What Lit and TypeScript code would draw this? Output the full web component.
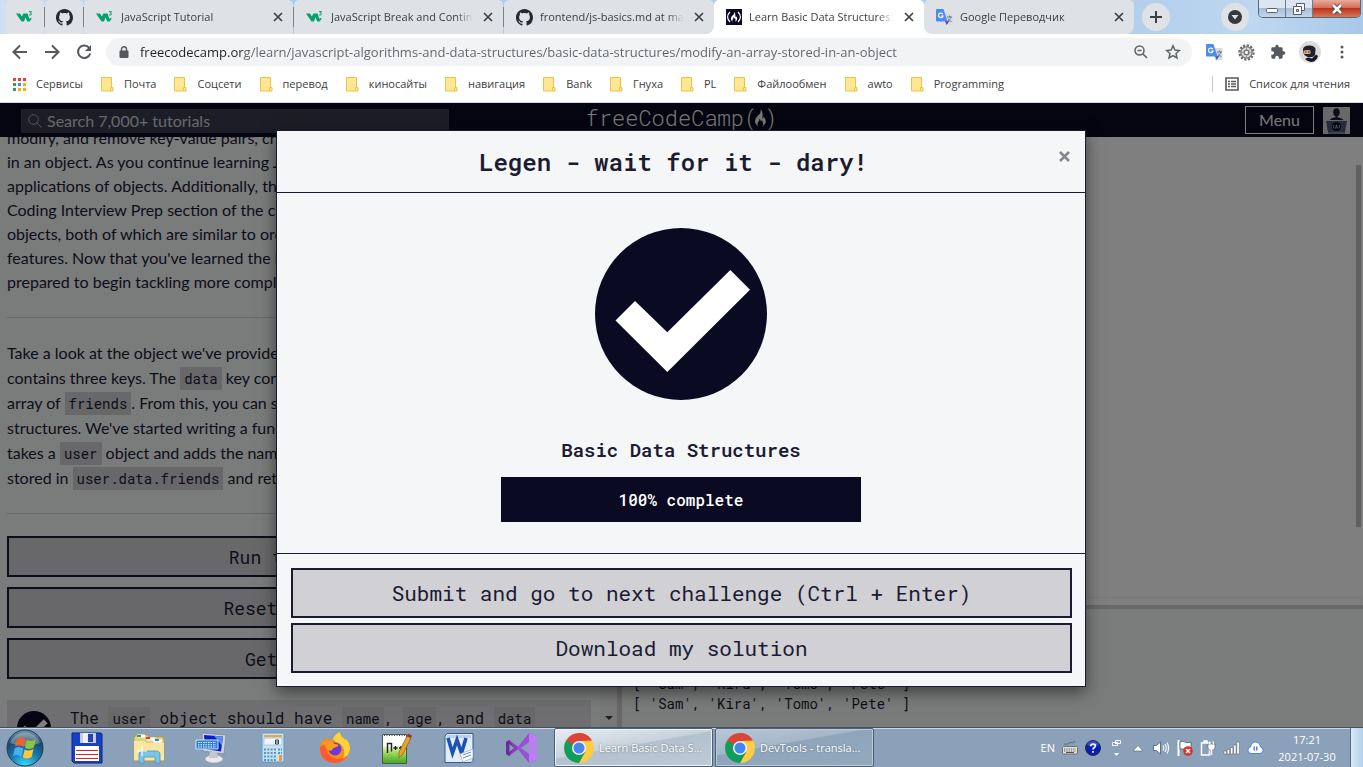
import { LitElement, html, css, TemplateResult } from "lit";
import { customElement } from "lit/decorators.js";
import { classMap } from "lit/directives/class-map.js";

const w3Icon = html`<svg width="18" height="16" viewBox="0 0 18 16" aria-hidden="true">
  <path d="M0 4.500h4l1.800 3 1.700-3h4l2 5.500 1-1 1.500.5-2.500 3h-2.200L9.500 8.500 8 12.500H5.500z" fill="#04a06a"/>
  <path d="M13 2.600h2.500l-1.200 1.500c1.600 0 1.600 2-.1 2-.6 0-1-.2-1.300-.6" fill="none" stroke="#04a06a" stroke-width="1"/>
</svg>`;

const githubIcon = html`<svg width="17" height="17" viewBox="0 0 16 16" aria-hidden="true">
  <path fill="#24292f" d="M8 0C3.580 0 0 3.580 0 8c0 3.540 2.290 6.530 5.470 7.590.4.070.55-.17.55-.38 0-.19-.01-.82-.01-1.490-2.010.37-2.530-.49-2.690-.94-.09-.23-.48-.94-.82-1.130-.28-.15-.68-.52-.01-.53.63-.01 1.080.58 1.230.82.72 1.210 1.870.87 2.330.66.07-.52.28-.87.51-1.070-1.780-.2-3.640-.89-3.640-3.950 0-.87.31-1.590.82-2.150-.08-.2-.36-1.020.08-2.120 0 0 .67-.21 2.200.82.64-.18 1.320-.27 2-.27s1.360.09 2 .27c1.530-1.040 2.200-.82 2.200-.82.44 1.100.16 1.920.08 2.120.51.56.82 1.270.82 2.150 0 3.070-1.870 3.750-3.650 3.950.29.25.54.73.54 1.480 0 1.070-.01 1.930-.01 2.200 0 .21.15.46.55.38A8.010 8.010 0 0 0 16 8c0-4.420-3.580-8-8-8z"/>
</svg>`;

const flame = "M9.500 1c.6 2.600-.4 3.900-1.800 5.500C6 8.300 4 10 4 12.800c0 2.200 1.400 4 3.400 5.200-1-1.200-1.300-2.900-.2-4.400.9-1.200 1.300-1.900 1-3.300 1.200.6 1.600 1.600 1.500 2.700.6-.3.900-.9.900-1.600 1.300 1.500 2.500 4.400.4 6.600 2.200-1 3.800-2.900 3.800-5.200 0-2.400-1.500-3.700-2.500-4.800.1 1.200-.2 2-.9 2.500C11.600 6.500 12.300 3 9.500 1z";

const fccIcon = html`<svg width="16" height="16" viewBox="0 0 16 16" aria-hidden="true">
  <rect width="16" height="16" fill="#0a0a23"/>
  <path d="M4 3C.8 6 .8 10 4 13M12 3c3.200 3 3.200 7 0 10" fill="none" stroke="#fff" stroke-width="1.200"/>
  <path transform="translate(2.600 2.300) scale(.58)" d="${flame}" fill="#fff"/>
</svg>`;

const translateIcon = html`<svg width="17" height="17" viewBox="0 0 17 17" aria-hidden="true">
  <path d="M7 4h9.500v12H9z" fill="#dcdcdc"/>
  <path d="M9 12l1.500 4 3-4z" fill="#3a4fd0"/>
  <path d="M11 8h5M13.500 6.500V8M15 8c-.5 2-2 3.500-4 4.500M12 9.500c.8 1.500 1.800 2.400 3.500 3" fill="none" stroke="#607d8b" stroke-width="1"/>
  <path d="M1 0h6.500l4 12.500H1a1 1 0 0 1-1-1V1a1 1 0 0 1 1-1z" fill="#4c8bf5"/>
  <path d="M6.800 5.200A2.300 2.300 0 1 0 7 7H5" fill="none" stroke="#fff" stroke-width="1.200"/>
</svg>`;

const tabClose = html`<svg width="10" height="10" viewBox="0 0 10 10" aria-hidden="true">
  <path d="M1 1l8 8M9 1L1 9" stroke="#3c4043" stroke-width="1.700"/>
</svg>`;

const folderIcon = html`<svg width="13" height="15" viewBox="0 0 13 15" aria-hidden="true">
  <path d="M.5.500h10v10h1.500v3.500H.5z" fill="#ffe694" stroke="#e8c547"/>
  <path d="M10.500 10.500h-1v3" fill="none" stroke="#e8c547"/>
</svg>`;

const chromeIcon = html`<svg width="30" height="30" viewBox="0 0 30 30" aria-hidden="true">
  <path d="M15 15L2.010 7.500A15 15 0 0 1 27.990 7.500z" fill="#db4437"/>
  <path d="M15 0a15 15 0 0 1 12.990 7.500H15z" fill="#db4437"/>
  <path d="M27.990 7.500A15 15 0 0 1 15 30l6.500-11.250L15 8z" fill="#ffcd40"/>
  <path d="M2.010 7.500A15 15 0 0 0 15 30l6.300-11.200L9 19z" fill="#0f9d58"/>
  <path d="M9 19L2.010 7.500 15 8l-3 5z" fill="#db4437"/>
  <path d="M2.010 7.500L8.500 18.800 11 12z" fill="#0f9d58"/>
  <circle cx="15" cy="15" r="7" fill="#f1f1f1"/>
  <circle cx="15" cy="15" r="5.500" fill="#4285f4"/>
</svg>`;

const passBadge = html`<svg class="badge" viewBox="0 0 172 172" role="img" aria-label="Passed">
  <circle cx="86" cy="86" r="86" fill="#0a0a23"/>
  <path d="M40 73L20.500 92.500 72.300 144 155 61.700 135.300 42 72.300 104.300z" fill="#fff"/>
</svg>`;

interface Tab {
  title: string;
  icon: TemplateResult;
  kind: "pinned" | "normal" | "before" | "active" | "after";
}

const tabs: Tab[] = [
  { title: "", icon: w3Icon, kind: "pinned" },
  { title: "", icon: githubIcon, kind: "pinned" },
  { title: "JavaScript Tutorial", icon: w3Icon, kind: "normal" },
  { title: "JavaScript Break and Continue", icon: w3Icon, kind: "normal" },
  { title: "frontend/js-basics.md at master", icon: githubIcon, kind: "before" },
  { title: "Learn Basic Data Structures: Modify", icon: fccIcon, kind: "active" },
  { title: "Google Переводчик", icon: translateIcon, kind: "after" },
];

const bookmarks = [
  "Почта", "Соцсети", "перевод", "киносайты", "навигация", "Bank",
  "Гнуха", "PL", "Файлообмен", "awto", "Programming",
];

@customElement("browser-chrome")
export class BrowserChrome extends LitElement {
  static styles = css`
    :host { display: block; flex: none; font: 11px/16px "Segoe UI", "Open Sans", "Noto Sans", sans-serif; color: #3c4043; }
    * { box-sizing: border-box; }
    button { border: 0; padding: 0; background: none; font: inherit; color: inherit; display: grid; place-items: center; flex: none; }
    a { color: inherit; text-decoration: none; }
    svg { display: block; flex: none; }
    .strip { display: flex; height: 34px; padding-left: 6px; background: linear-gradient(90deg, #cfe0f3 0, #a9cbea 20%, #b3d0ec 85%, #bfd7f0 92%, #a8c8e9 100%); }
    .slot { flex: 0 1 210px; min-width: 0; display: flex; }
    .slot.pinned { flex: none; width: 39px; }
    .slot.before { background: linear-gradient(#fff, #fff) right bottom / 12px 12px no-repeat; }
    .slot.after { background: linear-gradient(#fff, #fff) left bottom / 12px 12px no-repeat; }
    .tab { flex: 1; min-width: 0; display: flex; align-items: center; background: #dee1e6; border-radius: 5px 5px 0 0; padding-left: 12px; }
    .pinned .tab { justify-content: center; padding: 0; }
    .before .tab { border-radius: 5px 5px 8px 0; }
    .after .tab { border-radius: 5px 5px 8px 8px; }
    .active .tab { background: #fff; }
    .page { flex: 1; min-width: 0; display: flex; align-items: center; gap: 7px; }
    .pinned .page { flex: none; }
    .title { flex: 1; overflow: hidden; white-space: nowrap; -webkit-mask-image: linear-gradient(90deg, #000 88%, transparent); mask-image: linear-gradient(90deg, #000 88%, transparent); }
    .close { width: 30px; height: 20px; }
    .divider { align-self: center; width: 1px; height: 20px; background: #808388; flex: none; }
    .round { width: 28px; height: 28px; border-radius: 50%; background: #dee1e6; align-self: center; }
    .new { margin: 0 8px; }
    .end { margin-left: auto; display: flex; gap: 9px; padding-right: 2px; }
    .controls { display: flex; height: 18px; border: 1px solid #566778; border-top: 0; border-radius: 0 0 5px 5px; overflow: hidden; }
    .control { width: 27px; height: 17px; background: linear-gradient(#dbe6f2 45%, #a9bdd3 50%, #c4d6e8); border-right: 1px solid #6a7c90; }
    .control.quit { width: 47px; background: linear-gradient(#e9aa9b 0, #d6705b 45%, #b8351a 50%, #d87757); border: 0; }
    .toolbar { display: flex; align-items: center; height: 36px; background: #fff; padding-left: 4px; padding-right: 5px; }
    .tool { width: 32px; height: 32px; }
    .omni { flex: 1; min-width: 0; display: flex; align-items: center; height: 28px; border-radius: 14px; background: #f1f3f4; margin: 0 6px; padding: 0 3px 0 13px; }
    .url { flex: 1; min-width: 0; border: 0; outline: 0; margin-left: 11px; padding: 0; font: 13px/20px "Segoe UI", "Open Sans", "Noto Sans", sans-serif; color: transparent; background: linear-gradient(90deg, #202124 104px, #5f6368 104px); -webkit-background-clip: text; background-clip: text; }
    .marks { display: flex; align-items: center; height: 33px; background: #fff; border-bottom: 1px solid #d5d8dc; padding: 0 13px 4px; }
    .list { display: flex; align-items: center; gap: 18px; }
    .mark { display: flex; align-items: center; gap: 10px; white-space: nowrap; }
    .reading { margin-left: auto; border-left: 1px solid #c6c8cb; padding-left: 12px; }
  `;

  render() {
    return html`
      <nav class="strip" aria-label="Tabs">
        ${tabs.map((t) => html`
          <div class="slot ${t.kind}">
            <div class="tab">
              <a class="page" href="#" aria-label=${t.title || "Pinned tab"}>
                ${t.icon}${t.title ? html`<span class="title">${t.title}</span>` : ""}
              </a>
              ${t.title ? html`<button class="close" aria-label="Close tab">${tabClose}</button>` : ""}
            </div>
            ${t.kind === "pinned" || t.title.startsWith("JavaScript") ? html`<span class="divider"></span>` : ""}
          </div>`)}
        <button class="round new" aria-label="New tab">
          <svg width="14" height="14" viewBox="0 0 14 14"><path d="M7 1v12M1 7h12" stroke="#3c4043" stroke-width="2"/></svg>
        </button>
        <div class="end">
          <button class="round" aria-label="Search tabs">
            <svg width="14" height="14" viewBox="0 0 14 14"><circle cx="7" cy="7" r="7" fill="#35383c"/><path d="M3.500 5h7L7 9.500z" fill="#dee1e6"/></svg>
          </button>
          <div class="controls">
            <button class="control" aria-label="Minimize">
              <svg width="14" height="12" viewBox="0 0 14 12"><rect x="1.500" y="5.500" width="11" height="4" rx="1" fill="#fff" stroke="#525f6e"/></svg>
            </button>
            <button class="control" aria-label="Restore">
              <svg width="14" height="14" viewBox="0 0 14 14"><path d="M4.500 1.500h8v7h-8z" fill="#fff" stroke="#525f6e"/><path d="M1.500 4.500h8v8h-8z" fill="#fff" stroke="#525f6e"/><path d="M4.500 7.500h2v2h-2z" fill="#c4d6e8" stroke="#525f6e"/></svg>
            </button>
            <button class="control quit" aria-label="Close window">
              <svg width="14" height="12" viewBox="0 0 14 12"><path d="M3 2l8 8M11 2l-8 8" stroke="#4c3c48" stroke-width="4.500"/><path d="M3 2l8 8M11 2l-8 8" stroke="#fff" stroke-width="2.600"/></svg>
            </button>
          </div>
        </div>
      </nav>
      <div class="toolbar">
        <button class="tool" aria-label="Back"><svg width="16" height="16" viewBox="0 0 16 16"><path d="M15 8H2M8 1.500L1.500 8 8 14.500" fill="none" stroke="#55585d" stroke-width="2"/></svg></button>
        <button class="tool" aria-label="Forward"><svg width="16" height="16" viewBox="0 0 16 16"><path d="M1 8h13M8 1.500L14.500 8 8 14.500" fill="none" stroke="#55585d" stroke-width="2"/></svg></button>
        <button class="tool" aria-label="Reload"><svg width="16" height="16" viewBox="0 0 16 16"><path d="M13.200 4A6.200 6.200 0 1 0 14.200 9.500" fill="none" stroke="#55585d" stroke-width="2"/><path d="M15 1v6H9z" fill="#55585d"/></svg></button>
        <div class="omni">
          <svg width="10" height="12" viewBox="0 0 10 12"><path d="M2.500 5V3.200a2.500 2.500 0 0 1 5 0V5" fill="none" stroke="#55585d" stroke-width="1.400"/><rect x=".5" y="4.500" width="9" height="7.500" rx="1" fill="#55585d"/></svg>
          <input class="url" type="text" aria-label="Address" value="freecodecamp.org/learn/javascript-algorithms-and-data-structures/basic-data-structures/modify-an-array-stored-in-an-object">
          <button class="tool" aria-label="Zoom"><svg width="14" height="14" viewBox="0 0 14 14"><circle cx="5.500" cy="5.500" r="4.500" fill="none" stroke="#5f6368" stroke-width="1.500"/><path d="M3.500 5.500h4M9 9l4 4" stroke="#5f6368" stroke-width="1.600"/></svg></button>
          <button class="tool" aria-label="Bookmark this page"><svg width="16" height="16" viewBox="0 0 16 16"><path d="M8 1.800l1.900 4.200 4.500.5-3.400 3 1 4.500L8 11.700 4 14l1-4.500-3.400-3 4.500-.5z" fill="none" stroke="#5f6368" stroke-width="1.500"/></svg></button>
        </div>
        <button class="tool" aria-label="Translate">${translateIcon}</button>
        <button class="tool" aria-label="Settings"><svg width="17" height="17" viewBox="0 0 17 17"><circle cx="8.500" cy="8.500" r="7" fill="none" stroke="#6b6b6b" stroke-width="2.400" stroke-dasharray="2.200 1.460"/><circle cx="8.500" cy="8.500" r="5.600" fill="#dadada" stroke="#7b7b7b" stroke-width="1.300"/><circle cx="8.500" cy="8.500" r="2.400" fill="#f4f4f4" stroke="#707070" stroke-width="1.300"/><path d="M8.500 3v3M8.500 11v3M3 8.500h3M11 8.500h3" stroke="#999"/></svg></button>
        <button class="tool" aria-label="Extensions"><svg width="16" height="16" viewBox="0 0 24 24"><path fill="#55585d" d="M20.500 11H19V7a2 2 0 0 0-2-2h-4V3.500a2.500 2.500 0 0 0-5 0V5H4a2 2 0 0 0-2 2v3.800h1.500a2.700 2.700 0 0 1 0 5.400H2V20a2 2 0 0 0 2 2h3.800v-1.500a2.700 2.700 0 0 1 5.400 0V22H17a2 2 0 0 0 2-2v-4h1.500a2.500 2.500 0 0 0 0-5z"/></svg></button>
        <button class="tool" aria-label="Profile"><svg width="22" height="22" viewBox="0 0 22 22"><circle cx="11" cy="11" r="11" fill="#dcdcdc"/><path d="M4 8q1-4 7-3.500Q17 5 16.500 9l-.5 5Q14 17 9 16q-4-1-5-5z" fill="#20232b"/><path d="M4.500 9.800q4-1.500 7-.3v3q-3.500 1-7 0z" fill="#e5b088"/><path d="M6 11h1.500M9 11h1.500" stroke="#222"/><path d="M6 18l3-1.500 4 1 4-4 2 1.500q-1 4-4 5.500-5 1.500-9-2.500z" fill="#15181f"/></svg></button>
        <button class="tool" aria-label="Menu"><svg width="4" height="16" viewBox="0 0 4 16"><circle cx="2" cy="3" r="1.500" fill="#55585d"/><circle cx="2" cy="8" r="1.500" fill="#55585d"/><circle cx="2" cy="13" r="1.500" fill="#55585d"/></svg></button>
      </div>
      <nav class="marks" aria-label="Bookmarks">
        <div class="list">
          <a class="mark" href="#">
            <svg width="13" height="13" viewBox="0 0 13 13"><path d="M0 0h3v3H0zM5 0h3v3H5zM10 0h3v3h-3z" fill="#ea4335"/><path d="M0 5h3v3H0zM0 10h3v3H0z" fill="#34a053"/><path d="M5 5h3v3H5z" fill="#4285f4"/><path d="M10 5h3v3h-3zM5 10h3v3H5zM10 10h3v3h-3z" fill="#fbaa05"/></svg>
            Сервисы
          </a>
          ${bookmarks.map((b) => html`<a class="mark" href="#">${folderIcon}${b}</a>`)}
        </div>
        <a class="mark reading" href="#">
          <svg width="14" height="14" viewBox="0 0 14 14"><path d="M1 1h12v12H1z" fill="none" stroke="#55585d" stroke-width="1.600"/><path d="M3 4.500h2M6 4.500h5M3 7h2M6 7h5M3 9.500h2M6 9.500h5" stroke="#55585d" stroke-width="1.300"/></svg>
          Список для чтения
        </a>
      </nav>`;
  }
}

@customElement("lesson-page")
export class LessonPage extends LitElement {
  static styles = css`
    :host { display: flex; flex-direction: column; flex: 1; min-height: 0; position: relative; overflow: hidden; background: #f5f6f7; color: #1b1b32; font: 16px/24px Lato, sans-serif; }
    * { box-sizing: border-box; }
    svg { display: block; flex: none; }
    button { font: inherit; color: inherit; padding: 0; }
    p, h1, h2 { margin: 0; }
    .mono, code, pre { font-family: "Roboto Mono", "Liberation Mono", monospace; }
    .top { flex: none; display: grid; grid-template-columns: 1fr auto 1fr; align-items: center; height: 34px; padding: 0 13px 0 21px; background: #0a0a23; color: #fff; }
    .search { display: flex; align-items: center; gap: 5px; height: 24px; width: 100%; max-width: 428px; margin-top: 2px; padding-left: 7px; background: #3b3b4f; }
    .query { flex: 1; min-width: 0; border: 0; outline: 0; padding: 0; background: none; color: #d0d0d5; font: 16px/24px Lato, sans-serif; }
    .query::placeholder { color: #d0d0d5; opacity: 1; }
    .logo { display: flex; align-items: center; color: #f0f0f0; text-decoration: none; font-size: 22px; line-height: 30px; font-weight: 300; padding: 0 8px 4px 0; }
    .logo svg { margin: 0 -3px; }
    .account { justify-self: end; display: flex; gap: 9px; align-items: center; }
    .menu { width: 69px; height: 28px; border: 1px solid #fff; background: none; color: #f0f0f0; }
    .panes { flex: 1; min-height: 0; display: grid; grid-template-columns: 600px 17px 5px 1fr; }
    .lesson { overflow: hidden; padding: 0 9px 0 7px; }
    .lead { margin-top: -11px; }
    .line { display: block; white-space: nowrap; }
    .task { line-height: 25px; }
    .rule { height: 1px; margin: 23px 0 22px; background: #d0d0d5; }
    code { font-size: 14px; line-height: 20px; background: #d0d0d5; padding: 2px 4px; }
    .actions { display: flex; flex-direction: column; gap: 10px; }
    .action { height: 41px; border: 2px solid #1b1b32; background: #d0d0d5; font-size: 18px; }
    .tests { margin-top: 21px; padding: 4px 10px; display: flex; gap: 19px; background: #dfdfe2; height: 60px; }
    .tests .badge { width: 34px; height: 34px; margin-top: 7px; }
    .tests p { line-height: 28px; }
    .track { display: grid; align-items: end; justify-items: center; background: #f1f1f1; padding-bottom: 7px; }
    .split { background: #d0d0d5; }
    .work { display: grid; grid-template-rows: 1fr 4px 118px; min-width: 0; }
    .editor { display: grid; grid-template-rows: 1fr 8px; background: #fffffe; padding: 28px 2px 0 0; }
    .thumb { justify-self: end; width: 5px; height: 362px; background: #c0c0c0; }
    .hscroll { border: 1px solid #f0f0f0; border-width: 1px 1px 0 0; }
    .console { display: flex; flex-direction: column; justify-content: flex-end; margin: 0; padding: 0 11px 13px; font-size: 14px; line-height: 20px; overflow: hidden; }
    .veil { position: absolute; inset: 0; background: rgba(0, 0, 0, 0.5); display: flex; justify-content: center; align-items: flex-start; padding: 27px 1px 0 0; }
    .dialog { width: 100%; max-width: 810px; background: #f5f6f7; border: 1px solid #1b1b32; box-shadow: 0 5px 15px rgba(0, 0, 0, 0.5); }
    .head { display: flex; align-items: center; padding: 15px 13px 14px 14px; border-bottom: 1px solid #1b1b32; }
    .head h1 { flex: 1; text-align: center; font-size: 24px; line-height: 32px; font-weight: 600; }
    .x { width: 16px; height: 20px; align-self: flex-start; border: 0; background: none; display: grid; place-items: center; }
    .body { display: flex; flex-direction: column; align-items: center; padding: 35px 14px 31px; border-bottom: 1px solid #1b1b32; }
    .body .badge { width: 172px; height: 172px; }
    .body h2 { margin: 36px 0 14px; font-size: 19px; line-height: 27px; font-weight: 600; }
    .bar { width: 100%; max-width: 360px; background: #d0d0d5; }
    .fill { background: #0a0a23; color: #fff; text-align: center; font-size: 16px; line-height: 45px; font-weight: 500; }
    .foot { display: flex; flex-direction: column; gap: 5px; padding: 14px 13px 13px 14px; }
    .big { height: 50px; border: 2px solid #1b1b32; background: #d0d0d5; font-size: 21px; }
  `;

  render() {
    const progress = 100;
    return html`
      <header class="top">
        <label class="search">
          <svg width="14" height="14" viewBox="0 0 14 14" aria-hidden="true"><circle cx="5.500" cy="5.500" r="4.800" fill="none" stroke="#a8a8b0"/><path d="M9 9l4.500 4.500" stroke="#a8a8b0"/></svg>
          <input class="query" type="search" placeholder="Search 7,000+ tutorials" aria-label="Search tutorials">
        </label>
        <a class="logo mono" href="#">freeCodeCamp(<svg width="13" height="20" viewBox="3 0 13 19" aria-hidden="true"><path d="${flame}" fill="#f0f0f0"/></svg>)</a>
        <div class="account">
          <button class="menu">Menu</button>
          <svg width="27" height="27" viewBox="0 0 27 27" role="img" aria-label="Avatar">
            <rect width="27" height="27" fill="#d0d0d5"/>
            <ellipse cx="13.500" cy="5.300" rx="3.300" ry="4" fill="#1b1b32"/>
            <path d="M12.500 8h2v3h-2z" fill="#1b1b32"/>
            <path d="M6.500 13q2-2.500 5-2.500h4q3 0 5 2.500z" fill="#1b1b32"/>
            <path d="M3 14h21l-2 11H5z" fill="#54547c"/><path d="M5 26h17" stroke="#40406a"/>
            <circle cx="13.500" cy="19.500" r="4.600" fill="#0a0a23"/><path d="M11 17.800q-1 2 0 3.500M16 17.800q1 2 0 3.500M12.500 21.500l1-3.500 1 3.500" fill="none" stroke="#d0d0d5" stroke-width=".8"/>
          </svg>
        </div>
      </header>
      <div class="panes">
        <main class="lesson">
          <p class="lead">
            <span class="line">modify, and remove key-value pairs, check if keys exist, and iterate over all the keys</span>
            <span class="line">in an object. As you continue learning JavaScript you will see even more versatile</span>
            <span class="line">applications of objects. Additionally, the Data Structures lessons located in the</span>
            <span class="line">Coding Interview Prep section of the curriculum also cover the ES6 Map and Set</span>
            <span class="line">objects, both of which are similar to ordinary objects but provide some additional</span>
            <span class="line">features. Now that you've learned the basics of arrays and objects, you're fully</span>
            <span class="line">prepared to begin tackling more complex problems using JavaScript!</span>
          </p>
          <div class="rule"></div>
          <p class="task">
            <span class="line">Take a look at the object we've provided in the code editor. The object</span>
            <span class="line">contains three keys. The <code>data</code> key contains five keys, one of which is an</span>
            <span class="line">array of <code>friends</code>. From this, you can see how flexible objects are as data</span>
            <span class="line">structures. We've started writing a function. Finish writing it so that it</span>
            <span class="line">takes a <code>user</code> object and adds the name of the friend to the array</span>
            <span class="line">stored in <code>user.data.friends</code> and returns that array.</span>
          </p>
          <div class="rule"></div>
          <div class="actions">
            <button class="action mono">Run the Tests</button>
            <button class="action mono">Reset All Code</button>
            <button class="action mono">Get a Hint</button>
          </div>
          <div class="tests mono">
            ${passBadge}
            <p>The <code>user</code> object should have <code>name</code>, <code>age</code>, and <code>data</code></p>
          </div>
        </main>
        <div class="track"><svg width="8" height="4" viewBox="0 0 8 4" aria-hidden="true"><path d="M0 0h8L4 4z" fill="#404040"/></svg></div>
        <div class="split"></div>
        <div class="work">
          <div class="editor"><div class="thumb"></div><div class="hscroll"></div></div>
          <div class="split"></div>
          <pre class="console"><span>[ 'Sam', 'Kira', 'Tomo', 'Pete' ]</span><span>[ 'Sam', 'Kira', 'Tomo', 'Pete' ]</span></pre>
        </div>
      </div>
      <div class="veil">
        <section class="dialog" role="dialog" aria-labelledby="win-title">
          <div class="head">
            <h1 class="mono" id="win-title">Legen - wait for it - dary!</h1>
            <button class="x" aria-label="Close">
              <svg width="11" height="11" viewBox="0 0 11 11"><path d="M1 1l9 9M10 1l-9 9" stroke="#85858f" stroke-width="2.600"/></svg>
            </button>
          </div>
          <div class="body">
            ${passBadge}
            <h2 class="mono">Basic Data Structures</h2>
            <div class="bar" role="progressbar" aria-valuenow=${progress} aria-label="Basic Data Structures">
              <div class="fill mono" style="width:${progress}%">${progress}% complete</div>
            </div>
          </div>
          <div class="foot">
            <button class="big mono">Submit and go to next challenge (Ctrl + Enter)</button>
            <button class="big mono">Download my solution</button>
          </div>
        </section>
      </div>`;
  }
}

const launchers: { name: string; icon: TemplateResult }[] = [
  { name: "Total Commander", icon: html`<svg width="32" height="32" viewBox="0 0 32 32"><path d="M1 1h29l1 1v29H3l-2-2z" fill="#1740c8" stroke="#0c2580"/><path d="M9 1h16v10H9z" fill="#c9ccd6"/><path d="M12 1h5v10h-5z" fill="#eef0f5"/><path d="M17 2h5v8h-5z" fill="#2346b4"/><path d="M4 14h24v15H4z" fill="#fff"/><path d="M5 18.500h22M5 22.500h22M5 26.500h22" stroke="#d8232f" stroke-width="1.200"/></svg>` },
  { name: "Explorer", icon: html`<svg width="32" height="32" viewBox="0 0 32 32"><path d="M1 6l2-3h11l2 2h14l1 3v21H1z" fill="#e8cf7c" stroke="#b99a3b" stroke-width=".7"/><path d="M4 4h8M14 7h8M20 9h9" stroke="#fff" stroke-width="3"/><path d="M4 4h4" stroke="#2aa84a" stroke-width="2"/><path d="M13 6h4" stroke="#d8402f" stroke-width="2"/><path d="M22 8h4" stroke="#2b84d8" stroke-width="2"/><path d="M1 9h10l2 2h18v17H1z" fill="#f7e7a2"/><path d="M6 31V22q0-3 4-3h12q5 0 5 3v9h-5v-6H11v6z" fill="#7cc4e6" stroke="#4a96c4" stroke-width=".8"/><path d="M9 14v10M4 19h10" stroke="#fff"/></svg>` },
  { name: "Keyboard", icon: html`<svg width="32" height="32" viewBox="0 0 32 32"><path d="M7 1l24 2-2 19-21-3z" fill="#cfd3d8" stroke="#7d848c" stroke-width=".7"/><path d="M9 3l19 1.500-2 15L10 17z" fill="#0a1cd0"/><path d="M19 3.800l9 .7-1.200 9z" fill="#5c8cf0"/><ellipse cx="19" cy="27" rx="9" ry="4" fill="#e6e8ea" stroke="#9aa0a6" stroke-width=".6"/><path d="M15 20h7l1 6h-9z" fill="#c3c8cd"/><path d="M1 8h22v9H1z" fill="#2b7fd8" stroke="#cfe4f7"/><path d="M3 10.500h18M3 12.800h18M3 15h18" stroke="#fff" stroke-dasharray="1.500 1"/></svg>` },
  { name: "Calculator", icon: html`<svg width="24" height="32" viewBox="0 0 24 32"><rect x="1" y="1" width="22" height="29" rx="1" fill="#c8e2f5" stroke="#5f9cc8"/><path d="M3 3h18v2H3z" fill="#f5a03c"/><path d="M3 6h18v7H3z" fill="#eef6fb" stroke="#8ab4d2" stroke-width=".6"/><path d="M14.500 8h3v4h-3zM14.500 10h3" fill="none" stroke="#345"/><path d="M3 17.500h13M3 21h13M3 24.500h13M3 28h13" stroke="#5a93bf" stroke-width="2" stroke-dasharray="2 1.300"/><path d="M17 17.500h4M17 21h4" stroke="#5a93bf" stroke-width="2" stroke-dasharray="2 1"/><path d="M18 23h3v6h-3z" fill="#f0983a"/></svg>` },
  { name: "Firefox", icon: html`<svg width="32" height="32" viewBox="0 0 32 32"><path d="M16 31C7 31 1 25 1 16 1 12 3 9 4 7l1 3 3-5 2 4 4-2c2-4 4-6 7-7 0 4 3 5 5 8l1-1c3 3 4 7 4 10-1 8-7 14-15 14z" fill="#ff8a16"/><path d="M21 0c0 4 3 5 5 8l1-1c3 3 4 7 4 10-1 5-4 9-8 11 5-8 1-15-3-17-4-1-4-2-6-4 2-4 4-6 7-7z" fill="#ffd43a"/><path d="M1 16c0 9 6 15 15 15 6 0 10-3 13-8-4 4-9 5-14 3-6-2-8-8-8-13-3 0-5 0-6 3z" fill="#ff5a36"/><circle cx="16" cy="17" r="6.500" fill="#6b3bd8"/><path d="M4 10l6-1 6 3c3 0 4 1 3 2-2 2-5 1-6 4-2 2-5 0-6-2z" fill="#ff9c1e"/></svg>` },
  { name: "Notepad++", icon: html`<svg width="32" height="32" viewBox="0 0 32 32"><defs><linearGradient id="n" x2="0" y2="1"><stop offset=".35" stop-color="#fff"/><stop offset=".6" stop-color="#a7dc6a"/><stop offset="1" stop-color="#3fa51e"/></linearGradient></defs><path d="M1.500 2.500h24v29h-24z" fill="url(#n)" stroke="#4b5a48"/><path d="M3 3h21" stroke="#555" stroke-width="2" stroke-dasharray="1 1.500"/><path d="M6.500 21v-9.500h4v8M12.500 16h4M14.500 14v4M18 16h4M20 14v4" fill="none" stroke="#222" stroke-width="1.400"/><path d="M26 4l4 2-8 16-4 4v-6z" fill="#e8a32c" stroke="#8a5b14" stroke-width=".7"/><path d="M27 1.500l4 2-1 2.500-4-2z" fill="#a22a38"/></svg>` },
  { name: "Word", icon: html`<svg width="32" height="32" viewBox="0 0 32 32"><path d="M4 1.500h26v27l-2 2H2V4z" fill="#e4ecf7" stroke="#2a5ca8"/><path d="M4 3h24v3H4z" fill="#bcd0ec"/><path d="M5 6l4.500 15L14 8l4.500 13L23 6" fill="none" stroke="#1c54b4" stroke-width="3.600"/><path d="M17 22l13-5v9l-10 4z" fill="#fff" stroke="#8ba8cf" stroke-width=".7"/><path d="M20 23l8-3M20 26l8-3" stroke="#5b86c0"/></svg>` },
  { name: "Visual Studio", icon: html`<svg width="33" height="32" viewBox="0 0 33 32"><path d="M1 10l3-2 20 15V9L4 24l-3-2z" fill="#8b3fc0"/><path d="M1 10v12l3 2 5-8-5-8z" fill="#6a2c9c"/><path d="M4.500 12v8l4.500-4z" fill="#8ba0b8"/><path d="M24 1l8 3v24l-8 3-12-15z" fill="#9a4fd8"/><path d="M24 1l8 3v24l-8 3z" fill="#b77ff0"/><path d="M24 10v12l-8-6z" fill="#8ba0b8"/></svg>` },
];

const windows = [
  { title: "Learn Basic Data S...", active: true },
  { title: "DevTools - transla...", active: false },
];

@customElement("task-bar")
export class TaskBar extends LitElement {
  static styles = css`
    :host { display: flex; flex: none; height: 39px; background: #8ba1b9; border-top: 1px solid #42505f; box-shadow: inset 0 1px #c9d6e3; color: #fff; font: 11px/16px "Segoe UI", "Open Sans", "Noto Sans", sans-serif; }
    * { box-sizing: border-box; }
    svg { display: block; flex: none; }
    button { border: 0; padding: 0; background: none; font: inherit; color: inherit; }
    .start { width: 56px; display: grid; align-items: center; padding-left: 6px; }
    .launch { width: 62px; display: grid; place-items: center; }
    .windows { display: flex; gap: 2px; padding-left: 2px; }
    .window { width: 159px; display: flex; align-items: center; gap: 5px; padding-left: 9px; border: 1px solid #4d6074; border-radius: 2px; box-shadow: inset 0 0 0 1px #bccbd9; background: linear-gradient(170deg, #b9c8d6 0, #a5b7c8 40%, #8fa5bb 42%, #93a9be 100%); white-space: nowrap; text-shadow: 0 0 2px #5d6c7b; }
    .window.active { background: linear-gradient(170deg, #e8edf2 0, #c8d2dc 45%, #b3c0cd 47%, #bfcbd7 100%); box-shadow: inset 0 0 0 1px #eef3f7; }
    .tray { margin-left: auto; display: flex; align-items: center; gap: 7px; }
    .clock { width: 72px; text-align: center; line-height: 17px; }
    .show { align-self: stretch; width: 13px; border-left: 1px solid #5c7187; background: linear-gradient(90deg, #d9e8f6, #b6d0ea); }
  `;

  render() {
    return html`
      <button class="start" aria-label="Start">
        <svg width="38" height="38" viewBox="0 0 38 38">
          <defs>
            <radialGradient id="orb" cx=".5" cy="1" r="1"><stop offset="0" stop-color="#35e0ff"/><stop offset=".4" stop-color="#1a80b8"/><stop offset=".75" stop-color="#1a4668"/><stop offset="1" stop-color="#7d9cb4"/></radialGradient>
          </defs>
          <circle cx="19" cy="19" r="18" fill="url(#orb)" stroke="#1d3a54"/>
          <path d="M4 14a16 16 0 0 1 30 0q-15 6-30 0z" fill="#fff" opacity=".3"/>
          <path d="M11 10q4-3 8.500 0l-1.800 8q-4-3-8.500-.5z" fill="#f0622c"/>
          <path d="M20.800 10.800q4.500 2.500 9-.3l-2 8q-4 2.800-8.800.3z" fill="#8cc63c"/>
          <path d="M8.800 19.300q4-2.600 8.500.3l-1.900 8q-4-3-8.400-.3z" fill="#48b0ee"/>
          <path d="M18.700 20.400q4.500 2.500 8.800-.3l-1.900 8q-4.300 2.700-8.700.2z" fill="#fcc934"/>
        </svg>
      </button>
      ${launchers.map((l) => html`<button class="launch" aria-label=${l.name}>${l.icon}</button>`)}
      <div class="windows">
        ${windows.map((w) => html`<button class=${classMap({ window: true, active: w.active })}>${chromeIcon}${w.title}</button>`)}
      </div>
      <div class="tray">
        <span>EN</span>
        <svg width="16" height="16" viewBox="0 0 16 16"><path d="M2 4q4 1 6-1.500Q11 4 13 1" fill="none" stroke="#666"/><rect x=".5" y="6.500" width="15" height="7.500" rx="1" fill="#e4e4e0" stroke="#6d6d6d"/><path d="M2 9h12M2 11h12" stroke="#555" stroke-dasharray="1.300 1"/><path d="M4 12.500h8" stroke="#555"/></svg>
        <svg width="16" height="16" viewBox="0 0 16 16"><circle cx="8" cy="8" r="7.500" fill="#0a1fb0" stroke="#222a50"/><path d="M2 5a6.500 6.500 0 0 1 12 0q-6 3-12 0z" fill="#4f6ce8" opacity=".6"/><path d="M5.800 6.200q0-2.200 2.300-2.200t2.200 2q0 1-1.200 1.700T8 9.500M8 11v1.800" fill="none" stroke="#fff" stroke-width="1.700"/></svg>
        <svg width="16" height="18" viewBox="0 0 16 18"><path d="M7.500 1.500h5v3h-5zM4.500 3.500h5v3h-5z" fill="#8ba1b9" stroke="#fff"/><path d="M6 14h5l-2.500 3z" fill="#fff"/></svg>
        <svg width="14" height="10" viewBox="1 0 14 10"><path d="M3 8h10L8 2.500z" fill="#fff" stroke="#51616f" stroke-width=".6"/></svg>
        <svg width="18" height="16" viewBox="0 0 18 16"><path d="M1.500 5.500h3L8.500 2v12l-4-3.500h-3z" fill="#fff" stroke="#4b5967" stroke-width=".8"/><path d="M11 5.500q1.500 2.500 0 5M13 4q2.500 4 0 8M15 2.500q3.200 5.500 0 11" fill="none" stroke="#fff" stroke-width="1.100"/></svg>
        <svg width="16" height="16" viewBox="0 0 16 16"><path d="M1.500 0v16" stroke="#fff" stroke-width="2"/><path d="M3 2q3-1.500 5 0t6 0v7H3z" fill="#fff" stroke="#4b5967" stroke-width=".8"/><circle cx="11" cy="11" r="4.800" fill="#d8322a"/><path d="M9 9l4 4M13 9l-4 4" stroke="#fff" stroke-width="1.500"/></svg>
        <svg width="16" height="16" viewBox="0 0 16 16"><path d="M1.500 3h8v12h-8zM4 1h3v2H4z" fill="#8ba1b9" stroke="#fff" stroke-width="1.500"/><path d="M8 4h7v4q-1 2.500-3.500 2.500T8 8z" fill="#fff" stroke="#4b5967" stroke-width=".6"/><path d="M9.800 1.500V4M13.300 1.500V4M11.500 10v5" stroke="#fff" stroke-width="1.400"/></svg>
        <svg width="17" height="14" viewBox="0 0 17 14"><path d="M1 10h2.500v3H1zM4.200 8.500h2.500V13H4.200zM7.400 6.500h2.500V13H7.400zM10.600 4h2.500v9h-2.500zM13.800 1h2.500v12h-2.500z" fill="#fff" stroke="#4b5967" stroke-width=".5"/></svg>
        <svg width="17" height="14" viewBox="0 0 17 14"><path d="M4 12.500a3.300 3.300 0 0 1-.5-6.500Q4.500 1 8.500 1t5 5a3.300 3.300 0 0 1-.5 6.500z" fill="#fff" stroke="#3f78e0" stroke-width=".9"/><path d="M7.200 5.500v4M9.800 5.500v4" stroke="#2f6fe0" stroke-width="1.300"/></svg>
        <div class="clock"><div>17:21</div><div>2021-07-30</div></div>
        <button class="show" aria-label="Show desktop"></button>
      </div>`;
  }
}

@customElement("app-root")
export class AppRoot extends LitElement {
  static styles = css`
    :host { display: flex; flex-direction: column; height: 100vh; overflow: hidden; }
  `;

  render() {
    return html`<browser-chrome></browser-chrome><lesson-page></lesson-page><task-bar></task-bar>`;
  }
}
